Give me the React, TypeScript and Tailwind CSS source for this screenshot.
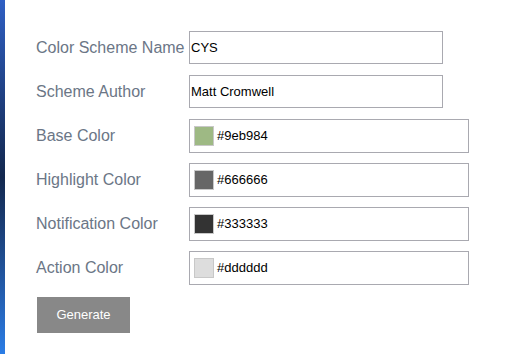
const fields = [
  { label: 'Base Color', value: '#9eb984' },
  { label: 'Highlight Color', value: '#666666' },
  { label: 'Notification Color', value: '#333333' },
  { label: 'Action Color', value: '#dddddd' },
]

function Swatch({ color }: { color: string }) {
  return (
    <span
      className="block h-5 w-5 shrink-0 border border-[#c8c8c8]"
      style={{ backgroundColor: color }}
    />
  )
}

export default function App() {
  return (
    <div className="flex h-[354px] w-[531px] bg-white font-['Liberation_Sans',Arial,sans-serif]">
      <div className="w-[5px] shrink-0 bg-gradient-to-b from-[#2f5fc4] via-[#13284f] to-[#2b7de6]" />
      <form className="flex flex-col pl-[31px] pt-[31px]">
        <div className="flex h-[33px] items-center">
          <label className="w-[153px] text-base text-[#6b7686]">Color Scheme Name</label>
          <div className="flex h-[33px] w-[254px] items-center border border-[#a9a9b0] px-[1px] text-[13px] text-black">
            CYS
          </div>
        </div>
        <div className="mt-[11px] flex h-[33px] items-center">
          <label className="w-[153px] text-base text-[#6b7686]">Scheme Author</label>
          <div className="flex h-[33px] w-[254px] items-center border border-[#a9a9b0] px-[1px] text-[13px] text-black">
            Matt Cromwell
          </div>
        </div>
        <div className="mt-[11px] flex flex-col gap-[10px]">
          {fields.map((f) => (
            <div key={f.label} className="flex h-[34px] items-center">
              <label className="w-[153px] text-base text-[#6b7686]">{f.label}</label>
              <div className="flex h-[34px] w-[280px] items-center gap-[3px] border border-[#a9a9b0] pl-1 text-[13px] text-black">
                <Swatch color={f.value} />
                {f.value}
              </div>
            </div>
          ))}
        </div>
        <button
          type="button"
          className="mt-3 ml-[1px] h-9 w-[93px] bg-[#888888] text-[13px] text-white"
        >
          Generate
        </button>
      </form>
    </div>
  )
}
